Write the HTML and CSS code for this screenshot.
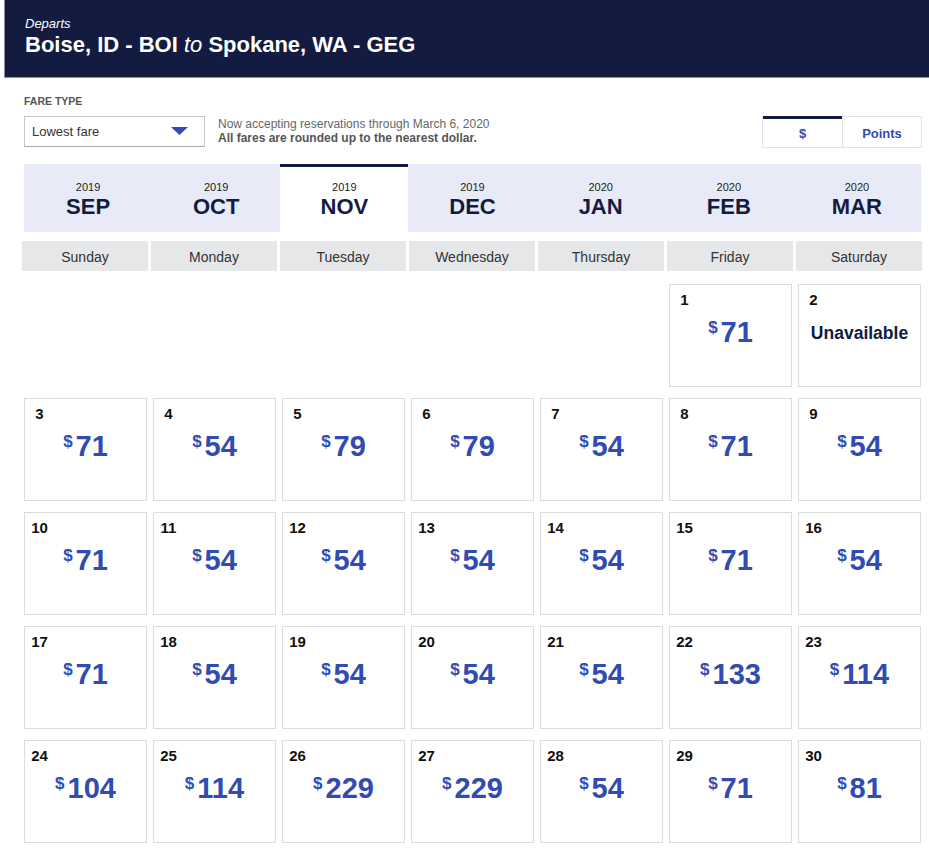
FILE: index.html
```html
<!DOCTYPE html>
<html>
<head>
<meta charset="utf-8">
<link rel="stylesheet" href="styles.css">
</head>
<body>
<div class="page">
  <header class="hero">
    <div class="departs">Departs</div>
    <div class="route">Boise, ID - BOI <i>to</i> Spokane, WA - GEG</div>
  </header>

  <section class="controls">
    <div class="fare">
      <div class="fare-label">FARE TYPE</div>
      <div class="fare-row">
        <div class="select">
          <span>Lowest fare</span>
          <svg class="caret" width="17" height="8" viewBox="0 0 17 8"><polygon points="0,0 17,0 8.5,8" fill="#304cb2"/></svg>
        </div>
        <div class="notes">
          <div>Now accepting reservations through March 6, 2020</div>
          <div class="bold">All fares are rounded up to the nearest dollar.</div>
        </div>
      </div>
    </div>
    <div class="toggle">
      <div class="tog active">$</div>
      <div class="tog">Points</div>
    </div>
  </section>

  <nav class="months">
    <div class="month"><span class="yr">2019</span><span class="mo">SEP</span></div>
    <div class="month"><span class="yr">2019</span><span class="mo">OCT</span></div>
    <div class="month current"><span class="yr">2019</span><span class="mo">NOV</span></div>
    <div class="month"><span class="yr">2019</span><span class="mo">DEC</span></div>
    <div class="month"><span class="yr">2020</span><span class="mo">JAN</span></div>
    <div class="month"><span class="yr">2020</span><span class="mo">FEB</span></div>
    <div class="month"><span class="yr">2020</span><span class="mo">MAR</span></div>
  </nav>

  <div class="weekdays">
    <div>Sunday</div><div>Monday</div><div>Tuesday</div><div>Wednesday</div><div>Thursday</div><div>Friday</div><div>Saturday</div>
  </div>

  <div class="cal">
    <div class="blank"></div><div class="blank"></div><div class="blank"></div><div class="blank"></div><div class="blank"></div>
    <div class="day"><div class="num">1</div><div class="price"><sup>$</sup>71</div></div>
    <div class="day"><div class="num">2</div><div class="na">Unavailable</div></div>

    <div class="day"><div class="num">3</div><div class="price"><sup>$</sup>71</div></div>
    <div class="day"><div class="num">4</div><div class="price"><sup>$</sup>54</div></div>
    <div class="day"><div class="num">5</div><div class="price"><sup>$</sup>79</div></div>
    <div class="day"><div class="num">6</div><div class="price"><sup>$</sup>79</div></div>
    <div class="day"><div class="num">7</div><div class="price"><sup>$</sup>54</div></div>
    <div class="day"><div class="num">8</div><div class="price"><sup>$</sup>71</div></div>
    <div class="day"><div class="num">9</div><div class="price"><sup>$</sup>54</div></div>

    <div class="day"><div class="num">10</div><div class="price"><sup>$</sup>71</div></div>
    <div class="day"><div class="num">11</div><div class="price"><sup>$</sup>54</div></div>
    <div class="day"><div class="num">12</div><div class="price"><sup>$</sup>54</div></div>
    <div class="day"><div class="num">13</div><div class="price"><sup>$</sup>54</div></div>
    <div class="day"><div class="num">14</div><div class="price"><sup>$</sup>54</div></div>
    <div class="day"><div class="num">15</div><div class="price"><sup>$</sup>71</div></div>
    <div class="day"><div class="num">16</div><div class="price"><sup>$</sup>54</div></div>

    <div class="day"><div class="num">17</div><div class="price"><sup>$</sup>71</div></div>
    <div class="day"><div class="num">18</div><div class="price"><sup>$</sup>54</div></div>
    <div class="day"><div class="num">19</div><div class="price"><sup>$</sup>54</div></div>
    <div class="day"><div class="num">20</div><div class="price"><sup>$</sup>54</div></div>
    <div class="day"><div class="num">21</div><div class="price"><sup>$</sup>54</div></div>
    <div class="day"><div class="num">22</div><div class="price"><sup>$</sup>133</div></div>
    <div class="day"><div class="num">23</div><div class="price"><sup>$</sup>114</div></div>

    <div class="day"><div class="num">24</div><div class="price"><sup>$</sup>104</div></div>
    <div class="day"><div class="num">25</div><div class="price"><sup>$</sup>114</div></div>
    <div class="day"><div class="num">26</div><div class="price"><sup>$</sup>229</div></div>
    <div class="day"><div class="num">27</div><div class="price"><sup>$</sup>229</div></div>
    <div class="day"><div class="num">28</div><div class="price"><sup>$</sup>54</div></div>
    <div class="day"><div class="num">29</div><div class="price"><sup>$</sup>71</div></div>
    <div class="day"><div class="num">30</div><div class="price"><sup>$</sup>81</div></div>
  </div>
</div>
</body>
</html>
```

FILE: styles.css
```css
* { box-sizing: border-box; }
html, body { margin: 0; padding: 0; background: #fff; }
body { font-family: "Liberation Sans", Arial, sans-serif; color: #333; }

.page { width: 929px; }

.hero {
  margin-left: 4px;
  height: 78px;
  background: #131b41;
  border-left: 1px solid #8c909c;
  border-bottom: 1px solid #8c909c;
  padding: 16px 0 0 20px;
  color: #fff;
}
.departs { font-size: 13px; font-style: italic; line-height: 16px; }
.route { font-size: 22px; font-weight: bold; line-height: 26px; }
.route i { font-weight: normal; }

.controls {
  display: flex;
  justify-content: space-between;
  align-items: flex-start;
  padding: 0 7px 0 24px;
  margin-top: 17px;
}
.fare-label { font-size: 10.5px; font-weight: bold; color: #555; line-height: 12px; }
.fare-row { display: flex; align-items: flex-start; margin-top: 9px; }
.select {
  width: 181px; height: 31px;
  border: 1px solid #c7c7c7;
  border-bottom-color: #aaa;
  display: flex; align-items: center; justify-content: space-between;
  padding: 0 16px 0 7px;
  font-size: 13px; color: #333;
}
.caret { display: block; margin-top: -2px; }
.notes { margin-left: 13px; font-size: 12px; line-height: 14px; color: #666; margin-top: 1px; }
.notes .bold { font-weight: bold; color: #555; }

.toggle {
  display: flex;
  border: 1px solid #e3e3e3;
  height: 32px;
  margin-top: 21px;
}
.tog {
  width: 79px;
  display: flex; align-items: center; justify-content: center;
  font-size: 13px; font-weight: bold; color: #304cb2;
  padding-top: 3px;
}
.tog + .tog { border-left: 1px solid #e3e3e3; }
.tog.active { border-top: 3px solid #131b41; margin-top: -1px; padding-top: 1px; }

.months {
  display: grid;
  grid-template-columns: repeat(7, 1fr);
  margin: 16px 8px 0 24px;
  background: #e8ebf7;
  height: 68px;
}
.month {
  display: flex; flex-direction: column; align-items: center;
  padding-top: 17px;
  color: #131b41;
}
.month.current { background: #fff; border-top: 3px solid #131b41; padding-top: 14px; }
.yr { font-size: 11px; line-height: 13px; color: #222; }
.mo { font-size: 22px; font-weight: bold; line-height: 24px; margin-top: 1px; }

.weekdays {
  display: grid;
  grid-template-columns: repeat(7, 126px);
  column-gap: 3px;
  margin: 9px 0 0 22px;
}
.weekdays div {
  height: 30px;
  background: #e6e7e9;
  display: flex; align-items: center; justify-content: center;
  font-size: 14px; color: #333;
  padding-top: 1px;
}

.cal {
  display: grid;
  grid-template-columns: repeat(7, 123px);
  grid-auto-rows: 103px;
  column-gap: 6px;
  row-gap: 11px;
  margin: 13px 0 0 24px;
}
.day {
  border: 1px solid #dcdcdc;
  padding: 6px 10px 0 10px;
}
.num {
  width: 23px;
  margin-left: -7px;
  text-align: center;
  font-size: 15px; font-weight: bold; line-height: 17px; color: #111;
}
.price {
  text-align: center;
  color: #304cb2;
  font-size: 29px; font-weight: bold;
  line-height: 34px;
  margin-top: 7px;
}
.price sup {
  font-size: 17px;
  vertical-align: top;
  line-height: 17px;
  position: relative; top: 4px;
  margin-right: 3px;
}
.na {
  text-align: center;
  font-size: 17.5px; font-weight: bold; color: #111b40;
  line-height: 20px;
  margin-top: 15px;
  margin-left: -10px; margin-right: -10px;
}
```
